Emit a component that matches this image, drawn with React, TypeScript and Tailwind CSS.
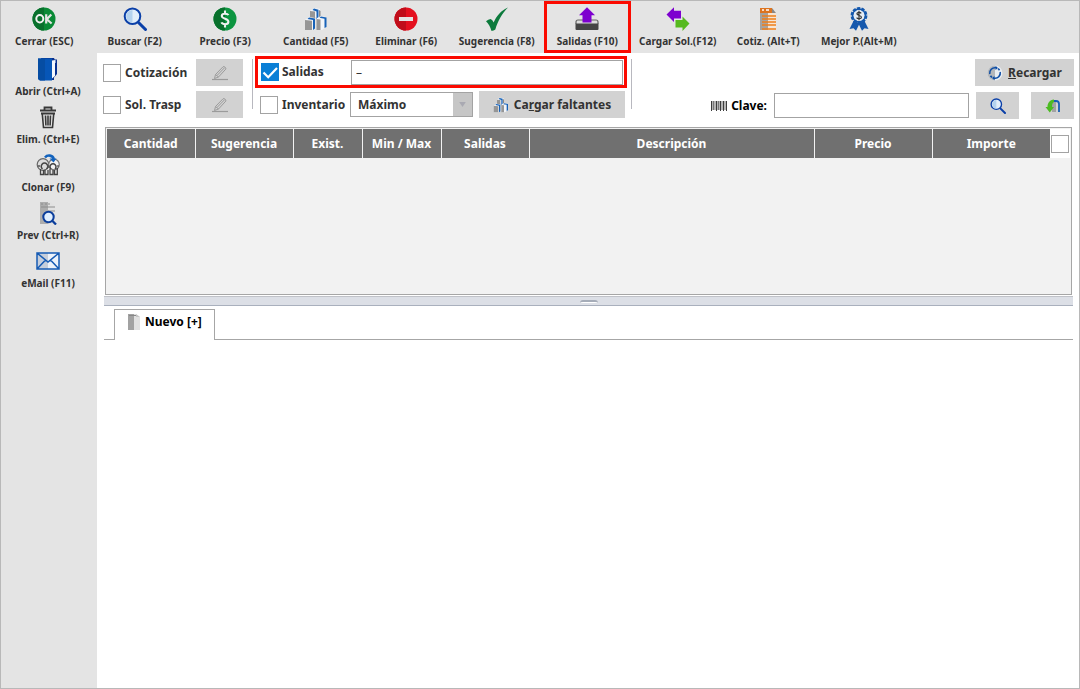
import { useState } from "react";
import type { ReactNode } from "react";

const svg = "block h-6 w-6 shrink-0";

const OkIcon = () => (
  <svg viewBox="0 0 24 24" className={svg} fill="none">
    <circle cx="12" cy="12" r="11.5" fill="#0a8a36" />
    <path d="M12 .5a11.5 11.5 0 0 0 0 23z" fill="#08702c" />
    <ellipse cx="7.8" cy="11.8" rx="3.5" ry="3.7" stroke="#f1f1f1" strokeWidth="2" />
    <path d="M14.2 7.2v9.4M19.3 7.4l-4.5 4.8 4.8 4.3" stroke="#e4e4e4" strokeWidth="2.2" />
  </svg>
);

const SearchIcon = ({ className = svg }: { className?: string }) => (
  <svg viewBox="0 0 24 24" className={className} fill="none">
    <path d="M15.5 15.5l7 7" stroke="#0a3fa8" strokeWidth="3" strokeLinecap="round" />
    <circle cx="9.5" cy="9.3" r="7.8" fill="#e2eefa" stroke="#0a3fa8" strokeWidth="2" />
    <path d="M9.5 3a6.3 6.3 0 0 0 0 12.6z" fill="#b4d2ee" />
  </svg>
);

const DollarIcon = () => (
  <svg viewBox="0 0 24 24" className={svg} fill="none">
    <circle cx="12" cy="12" r="11.5" fill="#0c9540" />
    <path d="M12 .5a11.5 11.5 0 0 0 0 23z" fill="#08702c" />
    <path d="M15.4 8.2C14.7 6.6 9 5.6 8.8 8.9c-.1 3.3 6.8 2.6 6.6 6-.2 3.2-6 2.7-7 .5M12 3.5v3M12 17v3.500" stroke="#f1f1f1" strokeWidth="2.1" />
  </svg>
);

const BoxesIcon = ({ className = svg }: { className?: string }) => (
  <svg viewBox="0 0 24 24" className={className}>
    <path d="M6 4l4-3 6 1v8H6z" fill="#f2f5f9" />
    <path d="M6 4l5 .6V12H6z" fill="#969696" />
    <path d="M10 1.600l4.500 1.200v8.400l-2 .8V4.400L8.500 3z" fill="#1762b8" />
    <path d="M15 3l1.500 1v7L15 12z" fill="#8a8a8a" />
    <path d="M1 13l4-3 6 1v11l-3 1H1z" fill="#f2f5f9" />
    <path d="M1 13l7 .8V23H1z" fill="#969696" />
    <path d="M5 10.600l6 1v10l-2 1.400v-10L3.500 12z" fill="#1762b8" />
    <path d="M13 11l4-2 5 1v10l-4 3h-5z" fill="#f2f5f9" />
    <path d="M12.500 12l4 .5V23h-4z" fill="#969696" />
    <path d="M17 9.500l5.500 1v9.500l-2 1v-9.200l-5-1z" fill="#1762b8" />
  </svg>
);

const NoEntryIcon = () => (
  <svg viewBox="0 0 24 24" className={svg}>
    <circle cx="12" cy="12" r="11.5" fill="#e4101f" />
    <path d="M12 .5a11.5 11.5 0 0 0 0 23z" fill="#c00d1a" />
    <path d="M5 10h14v4H5z" fill="#e5e5e5" />
  </svg>
);

const CheckIcon = () => (
  <svg viewBox="0 0 24 24" className={svg}>
    <path d="M1 14.300c1.500-1.200 3-1.900 4.600-2.300 1.700.8 2.400 2 3 3.600C11.500 8.600 16 3.500 23 .4 17 6.600 13 13.500 10.300 22.500c-1 .9-2.300 1.200-4 1.200C5.500 20 3.500 16.500 1 14.300z" fill="#0c7a3c" />
  </svg>
);

const OutboxIcon = () => (
  <svg viewBox="0 0 24 24" className={svg} fill="none">
    <path d="M1 17v-2q0-2 2-2h18q2 0 2 2v2" fill="#ddd" stroke="#666" strokeWidth="1.200" />
    <path d="M.5 16.500h23V22q0 1-1 1h-21q-1 0-1-1z" fill="#454545" />
    <path d="M12 .3l8 8h-3.500V15.500h-9V8.300H4z" fill="#7d00cf" />
  </svg>
);

const SwapIcon = () => (
  <svg viewBox="0 0 24 24" className={svg}>
    <path d="M.5 7.500L8 .3v3.500h7V11.500H8v3.500z" fill="#7d00cf" />
    <path d="M23.500 16.500l-7-7v3.500H9.500V20.500h7v3.400z" fill="#56b91f" />
  </svg>
);

const QuoteIcon = () => (
  <svg viewBox="0 0 24 24" className={svg} fill="none">
    <path d="M4 1h12l4 5v17H4z" fill="#f6e5d5" />
    <path d="M4 1h8v22H4z" fill="#a7a29d" />
    <path d="M4 1h12v5H4z" fill="#dd7420" />
    <path d="M6 3h2M10 3h3" stroke="#fff" strokeWidth="1.500" />
    <path d="M6 9h14M6 12h14M6 15h14M6 18h14M6 22h14" stroke="#ee7f1a" strokeWidth="1.600" />
    <path d="M16 1l4 5h-4z" fill="#888" />
  </svg>
);

const MedalIcon = () => (
  <svg viewBox="0 0 24 24" className={svg} fill="none">
    <path d="M6.500 14l-4 8 4-.7 2.500 2.500 3-6 3 6 2.500-2.500 4 .7-4-8z" fill="#1558ad" />
    <circle cx="12" cy="8.500" r="7" fill="#e6edf5" stroke="#1558ad" strokeWidth="2.800" strokeDasharray="3.200 1.200" />
    <circle cx="12" cy="8.500" r="6.500" stroke="#1558ad" strokeWidth="1.400" />
    <path d="M14.200 6.300c-1-1.500-4.300-1.300-4.300.5 0 2 4.500 1.300 4.500 3.400 0 2-3.800 2-4.800.4M12 3.800v9.500" stroke="#333" strokeWidth="1.200" />
  </svg>
);

const FolderIcon = () => (
  <svg viewBox="0 0 24 24" className={svg}>
    <path d="M5 1h13l.7 1.500H21V17l-3 3.500V23H8z" fill="#08308f" />
    <path d="M16 3.500l3.500-.5v3H19v13l-3 2.500z" fill="#f4f8fd" />
    <path d="M2 1.500h14V23.500H4l-2-1.500z" fill="#0756b7" />
    <path d="M2 1.500h7v22H4l-2-1.500z" fill="#064da3" />
  </svg>
);

const TrashIcon = () => (
  <svg viewBox="0 0 24 24" className={svg} fill="none" stroke="#383838">
    <path d="M8.500 4.500V2.500h7v2M4 5.500h16M5 8.500h14" strokeWidth="1.800" />
    <path d="M6.300 9l1.200 13.500h9L17.700 9M9.500 10.500l.4 10M12 10.500v10M14.500 10.500l-.4 10" strokeWidth="1.600" />
  </svg>
);

const CloneIcon = () => (
  <svg viewBox="0 0 24 24" className={svg} fill="none">
    <circle cx="7" cy="11.500" r="5.800" fill="#dcdcdc" stroke="#666" strokeWidth="1.200" />
    <circle cx="18" cy="11.500" r="5.300" fill="#f2f2f2" stroke="#777" strokeWidth="1.200" />
    <path d="M4.500 16v5.500h3V17M9 16.500v5h3V17M14 16v5.500h3V17M18.500 17v4.500h2.800V15" stroke="#444" strokeWidth="1.300" />
    <path d="M6.500 16a3.300 3.300 0 1 1 4 0M15 16a3 3 0 1 1 4 0" stroke="#444" strokeWidth="1.500" />
    <path d="M2 13h2M12 12v3M22 12v2" stroke="#555" strokeWidth="1.300" />
    <path d="M9 4.500c2.500-3 7.500-2.500 8.800 1.500" stroke="#1262bd" strokeWidth="2.600" />
    <path d="M13.500 5.500h7L17.500 9.500z" fill="#1262bd" />
  </svg>
);

const PreviewIcon = () => (
  <svg viewBox="0 0 24 24" className={svg} fill="none">
    <path d="M4 1h11l4 4v18H4z" fill="#e2e2e2" />
    <path d="M4 1h8v22H4z" fill="#adadad" />
    <path d="M5 3h2M9 3h2M12 3h2M5 6h7M12 6h7M12 10h7" stroke="#8d8d8d" strokeWidth="1.200" />
    <circle cx="12.500" cy="16" r="5.200" fill="#e0efff" stroke="#0b3e9c" strokeWidth="2" />
    <path d="M16.500 20l3.500 3.500" stroke="#0b3e9c" strokeWidth="2.300" />
  </svg>
);

const MailIcon = () => (
  <svg viewBox="0 0 24 24" className={svg} fill="none">
    <path d="M1 4h22v16H1z" fill="#edf2fa" />
    <path d="M1 4h11v16H1z" fill="#c6cedb" />
    <path d="M1 4h22v16H1zM1 4l11 9L23 4M1 20l8.500-9M23 20l-8.500-9" stroke="#165bb4" strokeWidth="1.500" />
  </svg>
);

const PencilIcon = () => (
  <svg viewBox="0 0 16 16" className="block h-4 w-4" fill="none" stroke="#9b9b9b">
    <path d="M3.500 9.500L11 1.800c1-.8 3.500 1 2.800 2.300L6.500 12l-4 1.500zM3.500 9.500l3 2.500M5 10.500l7.500-7.700" />
    <path d="M0 14.500h16" strokeWidth="1.200" />
  </svg>
);

const ReloadIcon = () => (
  <svg viewBox="0 0 16 16" className="block h-4 w-4" fill="none">
    <circle cx="8" cy="8" r="7.500" fill="#e9edf2" />
    <path d="M8 .5a7.500 7.500 0 0 0 0 15z" fill="#b4b7bb" />
    <path d="M2.800 9A5.300 5.300 0 0 1 9 2.800M13.200 7A5.300 5.300 0 0 1 7 13.200M11 3.700a5.300 5.300 0 0 1 1.500 1.500M5 12.300a5.300 5.300 0 0 1-1.500-1.500" stroke="#0d4da5" strokeWidth="1.600" />
    <path d="M8.500 .8l2.500 2.200-2.500 2zM7.500 15.200L5 13l2.500-2z" fill="#0d4da5" />
  </svg>
);

const ReturnIcon = () => (
  <svg viewBox="0 0 16 16" className="block h-4 w-4" fill="none">
    <path d="M7 3h4v11H7z" fill="#a3a3a3" />
    <path d="M8 3h3c2 0 3 1.500 3 3v8" stroke="#175fb5" strokeWidth="1.800" />
    <path d="M9 1.500C4.500 2 2.500 5 2.500 9H.5l4.300 5.500L9 9H7C7 6.500 7.500 4.500 9 4z" fill="#4cbb22" />
  </svg>
);

const BarcodeIcon = () => (
  <svg viewBox="0 0 16 10" className="block h-[10px] w-4" fill="none">
    <path d="M0 0h16v9H0z" fill="#b5b5b5" />
    <path d="M.5 0v10M5.500 0v10M9.500 0v10M12.500 0v10M15.500 0v10" stroke="#3c3c3c" />
    <path d="M2.500 0v9M7.500 0v9" stroke="#777" />
  </svg>
);

const DocIcon = () => (
  <svg viewBox="0 0 12 16" className="block h-4 w-3" fill="none">
    <path d="M0 0h8l4 3v13H0z" fill="#e1e1e1" />
    <path d="M0 0h6v16H0z" fill="#a2a2a2" />
    <path d="M1 1.500h7" stroke="#888" />
    <path d="M8 0l4 3H8z" fill="#c4c4c4" />
  </svg>
);

type Action = { label: string; icon: ReactNode; active?: boolean };

const toolbar: Action[] = [
  { label: "Cerrar (ESC)", icon: <OkIcon /> },
  { label: "Buscar (F2)", icon: <SearchIcon /> },
  { label: "Precio (F3)", icon: <DollarIcon /> },
  { label: "Cantidad (F5)", icon: <BoxesIcon /> },
  { label: "Eliminar (F6)", icon: <NoEntryIcon /> },
  { label: "Sugerencia (F8)", icon: <CheckIcon /> },
  { label: "Salidas (F10)", icon: <OutboxIcon />, active: true },
  { label: "Cargar Sol.(F12)", icon: <SwapIcon /> },
  { label: "Cotiz. (Alt+T)", icon: <QuoteIcon /> },
  { label: "Mejor P.(Alt+M)", icon: <MedalIcon /> },
];

const sidebar: Action[] = [
  { label: "Abrir (Ctrl+A)", icon: <FolderIcon /> },
  { label: "Elim. (Ctrl+E)", icon: <TrashIcon /> },
  { label: "Clonar (F9)", icon: <CloneIcon /> },
  { label: "Prev (Ctrl+R)", icon: <PreviewIcon /> },
  { label: "eMail (F11)", icon: <MailIcon /> },
];

const columns = [
  { label: "Cantidad", width: "w-[88px]" },
  { label: "Sugerencia", width: "w-[98px]" },
  { label: "Exist.", width: "w-[69px]" },
  { label: "Min / Max", width: "w-[79px]" },
  { label: "Salidas", width: "w-[88px]" },
  { label: "Descripción", width: "" },
  { label: "Precio", width: "w-[118px]" },
  { label: "Importe", width: "w-[118px]" },
];

function CheckBox({ id, checked = false, label }: { id: string; checked?: boolean; label?: string }) {
  const [on, setOn] = useState(checked);
  return (
    <span className="grid shrink-0">
      <input
        id={id}
        type="checkbox"
        aria-label={label}
        checked={on}
        onChange={() => setOn(!on)}
        className="col-start-1 row-start-1 h-[18px] w-[18px] appearance-none border border-[#a3a3a3] bg-white checked:border-[#0a7fd6] checked:bg-[#0a7fd6]"
      />
      {on && (
        <svg viewBox="0 0 18 18" className="pointer-events-none col-start-1 row-start-1 h-[18px] w-[18px]" fill="none">
          <path d="M2.500 9.500l4.700 4.700L16 5" stroke="#fff" strokeWidth="2.200" />
        </svg>
      )}
    </span>
  );
}

const greyButton = "flex h-[27px] items-center justify-center bg-[#d2d2d2]";

export default function App() {
  return (
    <div className="flex min-h-screen flex-col border border-[#b8b8b8] bg-white font-['Noto_Sans',sans-serif] text-xs font-bold text-[#333]">
      <header className="bg-[#e4e4e4]">
        <nav className="grid w-[901px] grid-cols-10 gap-1">
          {toolbar.map((a) => (
            <button
              key={a.label}
              className={`flex h-[52px] flex-col items-center gap-[3px] pt-[6px] text-[10px] leading-[14px] whitespace-nowrap ${a.active ? "inset-ring-3 inset-ring-[#fb0a00]" : ""}`}
            >
              {a.icon}
              <span>{a.label}</span>
            </button>
          ))}
        </nav>
      </header>

      <div className="flex grow">
        <aside className="w-24 shrink-0 bg-[#e4e4e4] pt-1 pr-[2px]">
          {sidebar.map((a) => (
            <button
              key={a.label}
              className="flex h-12 w-full flex-col items-center gap-[3px] text-[10px] leading-[14px] whitespace-nowrap"
            >
              {a.icon}
              <span>{a.label}</span>
            </button>
          ))}
        </aside>

        <main className="min-w-0 grow pt-[3px] pr-[5px] pl-[6px]">
          <div className="flex h-[71px] items-start">
            <div className="grid grid-cols-[18px_75px_47px] items-center gap-y-[5px] pt-[3px]">
              <CheckBox id="cotizacion" />
              <label htmlFor="cotizacion" className="pl-1">Cotización</label>
              <button aria-label="Editar cotización" className={greyButton}><PencilIcon /></button>
              <CheckBox id="traspaso" />
              <label htmlFor="traspaso" className="pl-1">Sol. Trasp</label>
              <button aria-label="Editar traspaso" className={greyButton}><PencilIcon /></button>
            </div>

            <div className="mt-[3px] ml-[9px] h-[50px] border-l border-[#b8b8bf]" />

            <div className="ml-[2px]">
              <div className="flex h-8 w-[372px] items-center border-3 border-[#fb0a00] pr-px pl-[3px]">
                <CheckBox id="salidas" checked />
                <label htmlFor="salidas" className="w-[72px] pl-[3px]">Salidas</label>
                <input
                  aria-label="Detalle de salidas"
                  defaultValue="–"
                  className="h-[25px] min-w-0 grow border border-[#a3a3a3] bg-white px-1 font-normal outline-none"
                />
              </div>
              <div className="flex h-8 items-center pt-px pl-[5px]">
                <CheckBox id="inventario" />
                <label htmlFor="inventario" className="w-[72px] pl-1">Inventario</label>
                <span className="grid">
                  <select
                    aria-label="Nivel de inventario"
                    className="col-start-1 row-start-1 h-[25px] w-[123px] appearance-none border border-[#a3a3a3] bg-white pl-[7px] outline-none"
                  >
                    <option>Máximo</option>
                    <option>Mínimo</option>
                  </select>
                  <span className="pointer-events-none col-start-1 row-start-1 flex w-5 items-center justify-center justify-self-end border border-l-0 border-[#a3a3a3] bg-[#c6c6c6]">
                    <svg viewBox="0 0 8 6" className="h-[5px] w-[7px]"><path d="M0 0h8L4 6z" fill="#a9a9b2" /></svg>
                  </span>
                </span>
                <button className={`${greyButton} ml-[6px] w-[146px] gap-[5px]`}>
                  <BoxesIcon className="block h-4 w-4" />
                  <span>Ca<u>r</u>gar faltantes</span>
                </button>
              </div>
            </div>

            <div className="mt-[3px] ml-1 h-[50px] border-l border-[#b8b8bf]" />

            <div className="ml-auto flex flex-col items-end gap-[6px] pt-[3px]">
              <button className={`${greyButton} w-[99px] gap-[5px]`}>
                <ReloadIcon />
                <span><u>R</u>ecargar</span>
              </button>
              <div className="flex items-center">
                <BarcodeIcon />
                <label htmlFor="clave" className="pl-1 text-black">Clave:</label>
                <input id="clave" className="ml-[7px] h-[25px] w-[195px] border border-[#a3a3a3] bg-white px-1 outline-none" />
                <button aria-label="Buscar clave" className={`${greyButton} ml-[7px] w-[43px]`}>
                  <SearchIcon className="block h-4 w-4" />
                </button>
                <button aria-label="Regresar" className={`${greyButton} ml-3 w-[43px]`}><ReturnIcon /></button>
              </div>
            </div>
          </div>

          <section className="mr-[2px] ml-[2px] h-[168px] border border-[#a6a6a6] bg-[#f2f2f2] p-px">
            <div className="flex bg-white">
              <table className="min-w-0 grow table-fixed border-collapse text-white">
                <thead>
                  <tr>
                    {columns.map((c) => (
                      <th key={c.label} className={`${c.width} h-[29px] border-r border-[#f2f2f2] bg-[#707070] p-0 text-center last:border-r-0`}>
                        {c.label}
                      </th>
                    ))}
                  </tr>
                </thead>
              </table>
              <div className="flex w-5 items-center justify-center pr-px">
                <CheckBox id="todos" label="Seleccionar todo" />
              </div>
            </div>
          </section>

          <div className="mt-px mr-px ml-px flex h-[10px] items-center justify-center border-t border-b border-t-[#c0c2c8] border-b-[#a9b0bd] bg-[#dcdfe6]">
            <div className="h-[3px] w-[18px] rounded-t-sm border-t-2 border-[#a5acb8] bg-white" />
          </div>

          <div role="tablist" className="mt-[3px] mr-px ml-px flex">
            <div className="w-[10px] border-b border-[#a6a6a6]" />
            <button role="tab" aria-selected="true" className="flex h-[31px] w-[101px] items-center border border-b-0 border-[#a6a6a6] pb-[6px] pl-[13px] text-black">
              <DocIcon />
              <span className="pl-[5px]">Nuevo [+]</span>
            </button>
            <div className="grow border-b border-[#a6a6a6]" />
          </div>
        </main>
      </div>
    </div>
  );
}
